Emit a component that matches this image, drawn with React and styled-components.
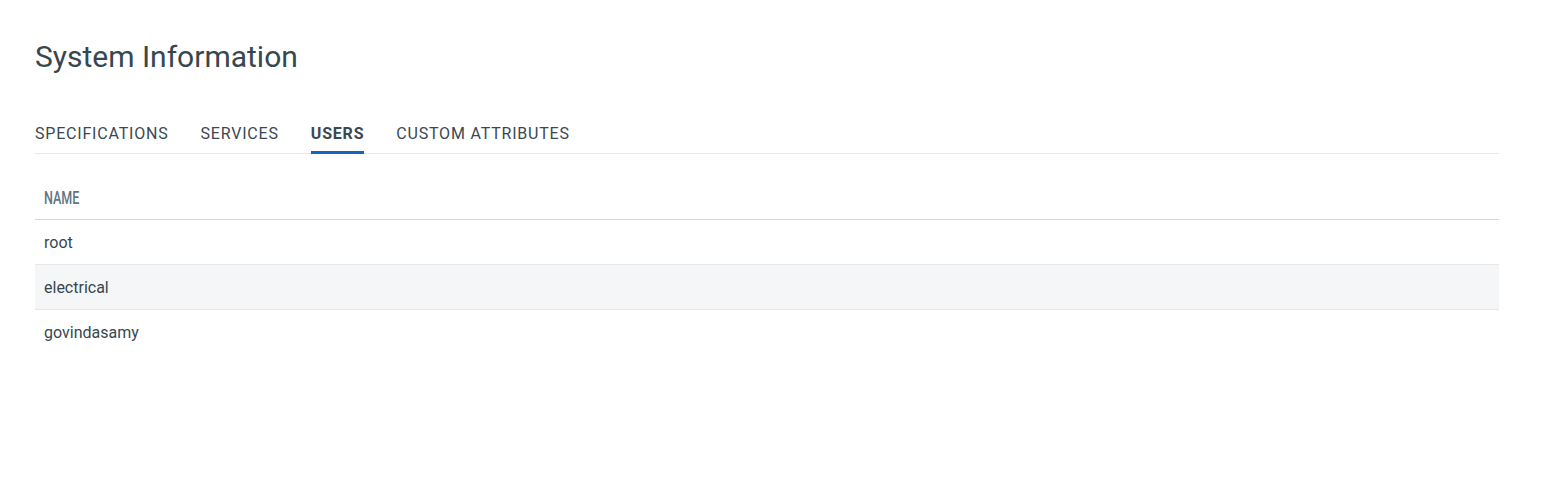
import { useState } from 'react';
import styled, { createGlobalStyle } from 'styled-components';

const colors = {
  text: '#37474f',
  tabText: '#3a4852',
  active: '#1565c0',
  headerText: '#607684',
  rule: '#e6e8ea',
  headRule: '#d3d6da',
  stripe: '#f5f6f8',
};

const GlobalStyle = createGlobalStyle`
  body {
    margin: 0;
    background: #fff;
    font-family: Roboto, "Liberation Sans", sans-serif;
    color: ${colors.text};
  }
`;

const Page = styled.main`
  padding: 37px 42px 0 35px;
  width: 1464px;
`;

const Title = styled.h1`
  margin: 0 0 45px;
  font-size: 30px;
  font-weight: 400;
  line-height: 40px;
  color: ${colors.text};
`;

const TabBar = styled.nav`
  display: flex;
  gap: 32px;
  border-bottom: 1px solid ${colors.rule};
`;

const Tab = styled.button`
  padding: 3px 0 8px;
  border: none;
  background: none;
  cursor: pointer;
  font-family: Roboto, "Liberation Sans", sans-serif;
  font-size: 16px;
  line-height: 18px;
  letter-spacing: 0.8px;
  font-weight: ${(p) => (p.$active ? 700 : 400)};
  color: ${colors.tabText};
  border-bottom: 3px solid ${(p) => (p.$active ? colors.active : 'transparent')};
  margin-bottom: -1px;
`;

const Table = styled.table`
  width: 100%;
  margin-top: 25px;
  border-collapse: collapse;
`;

const HeadCell = styled.th`
  text-align: left;
  padding: 9px 9px 10px;
  font-weight: 400;
  line-height: 20px;
  border-bottom: 1px solid ${colors.headRule};
`;

const HeadLabel = styled.span`
  display: inline-block;
  font-family: Roboto, "Liberation Sans", sans-serif;
  font-size: 19px;
  font-weight: 500;
  color: ${colors.headerText};
  transform: scaleX(0.66);
  transform-origin: left center;
`;

const Row = styled.tr`
  background: ${(p) => (p.$striped ? colors.stripe : '#fff')};
  border-bottom: ${(p) => (p.$last ? 'none' : `1px solid ${colors.rule}`)};
`;

const Cell = styled.td`
  height: 44px;
  padding: 0 9px;
  font-size: 16px;
  color: ${colors.text};
  vertical-align: middle;
`;

const tabs = ['Specifications', 'Services', 'Users', 'Custom Attributes'];
const users = ['root', 'electrical', 'govindasamy'];

export default function App() {
  const [active, setActive] = useState('Users');
  return (
    <>
      <GlobalStyle />
      <Page>
        <Title>System Information</Title>
        <TabBar>
          {tabs.map((t) => (
            <Tab key={t} type="button" $active={t === active} onClick={() => setActive(t)}>
              {t.toUpperCase()}
            </Tab>
          ))}
        </TabBar>
        <Table>
          <thead>
            <tr>
              <HeadCell>
                <HeadLabel>NAME</HeadLabel>
              </HeadCell>
            </tr>
          </thead>
          <tbody>
            {users.map((u, i) => (
              <Row key={u} $striped={i % 2 === 1} $last={i === users.length - 1}>
                <Cell>{u}</Cell>
              </Row>
            ))}
          </tbody>
        </Table>
      </Page>
    </>
  );
}
